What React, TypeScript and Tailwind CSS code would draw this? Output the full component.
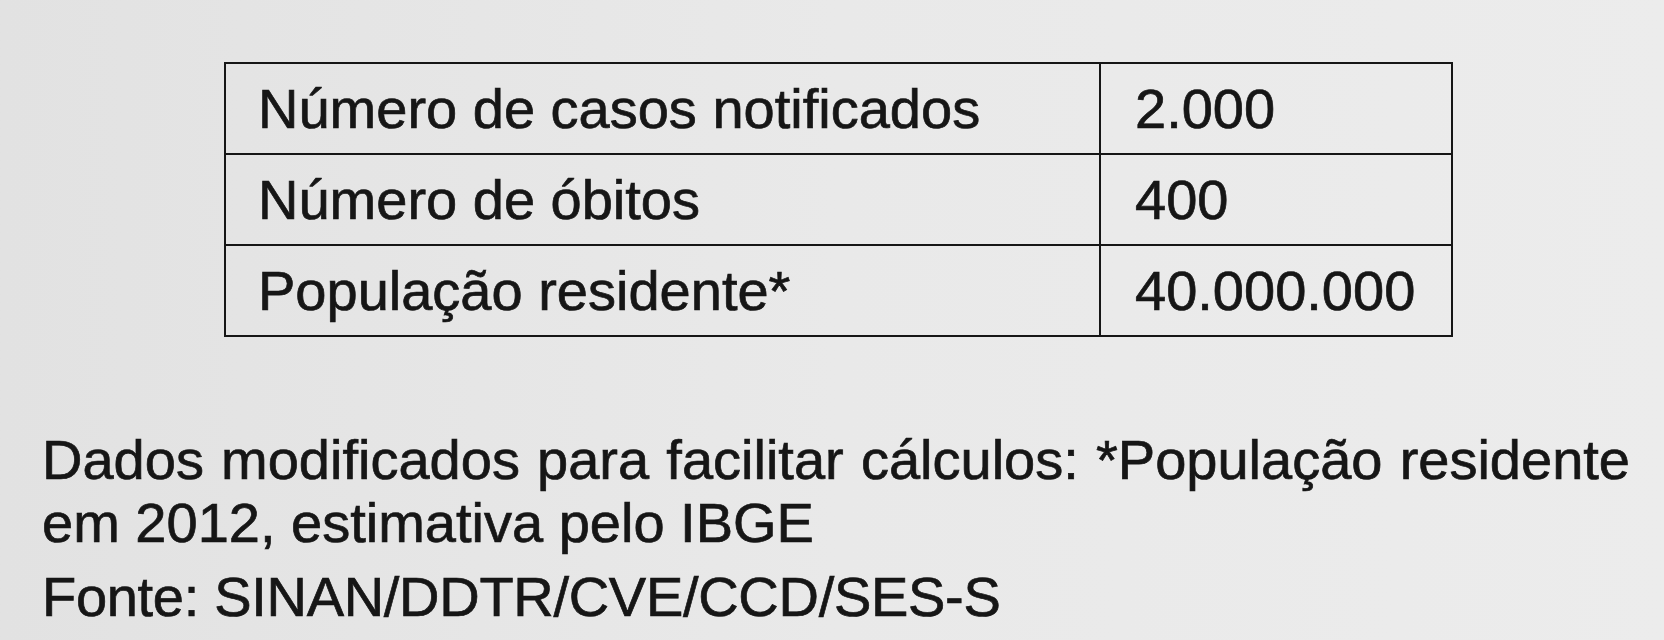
export default function App() {
  const rows = [
    { label: 'Número de casos notificados', value: '2.000' },
    { label: 'Número de óbitos', value: '400' },
    { label: 'População residente*', value: '40.000.000' },
  ];

  return (
    <div
      className="h-[640px] w-full overflow-hidden bg-linear-to-r from-[#e2e2e2] via-[#e9e9e9] to-[#ececec] text-[#161616] [-webkit-text-stroke:0.7px_#161616]"
      style={{ fontFamily: '"Liberation Sans", Arial, sans-serif' }}
    >
      <div className="pl-[224px] pt-[62px]">
        <div className="w-[1229px] border-[2.5px] border-[#161616]">
          {rows.map((row, i) => (
            <div key={row.label} className={`flex ${i > 0 ? 'border-t-[2.5px] border-[#161616]' : ''}`}>
              <div className="w-[875px] shrink-0 border-r-[2.5px] border-[#161616] pl-[32px] text-[56px] leading-[89px]">
                {row.label}
              </div>
              <div className="flex-1 pl-[34px] text-[56px] leading-[89px]">{row.value}</div>
            </div>
          ))}
        </div>
      </div>

      <div className="mt-[91px] ml-[42px] w-[1588px] text-[56px]">
        <p className="text-justify leading-[63px]">
          Dados modificados para facilitar cálculos: *População residente em 2012, estimativa pelo IBGE
        </p>
        <p className="mt-[11px] leading-[63px] tracking-[-0.3px]">Fonte: SINAN/DDTR/CVE/CCD/SES-S</p>
      </div>
    </div>
  );
}
